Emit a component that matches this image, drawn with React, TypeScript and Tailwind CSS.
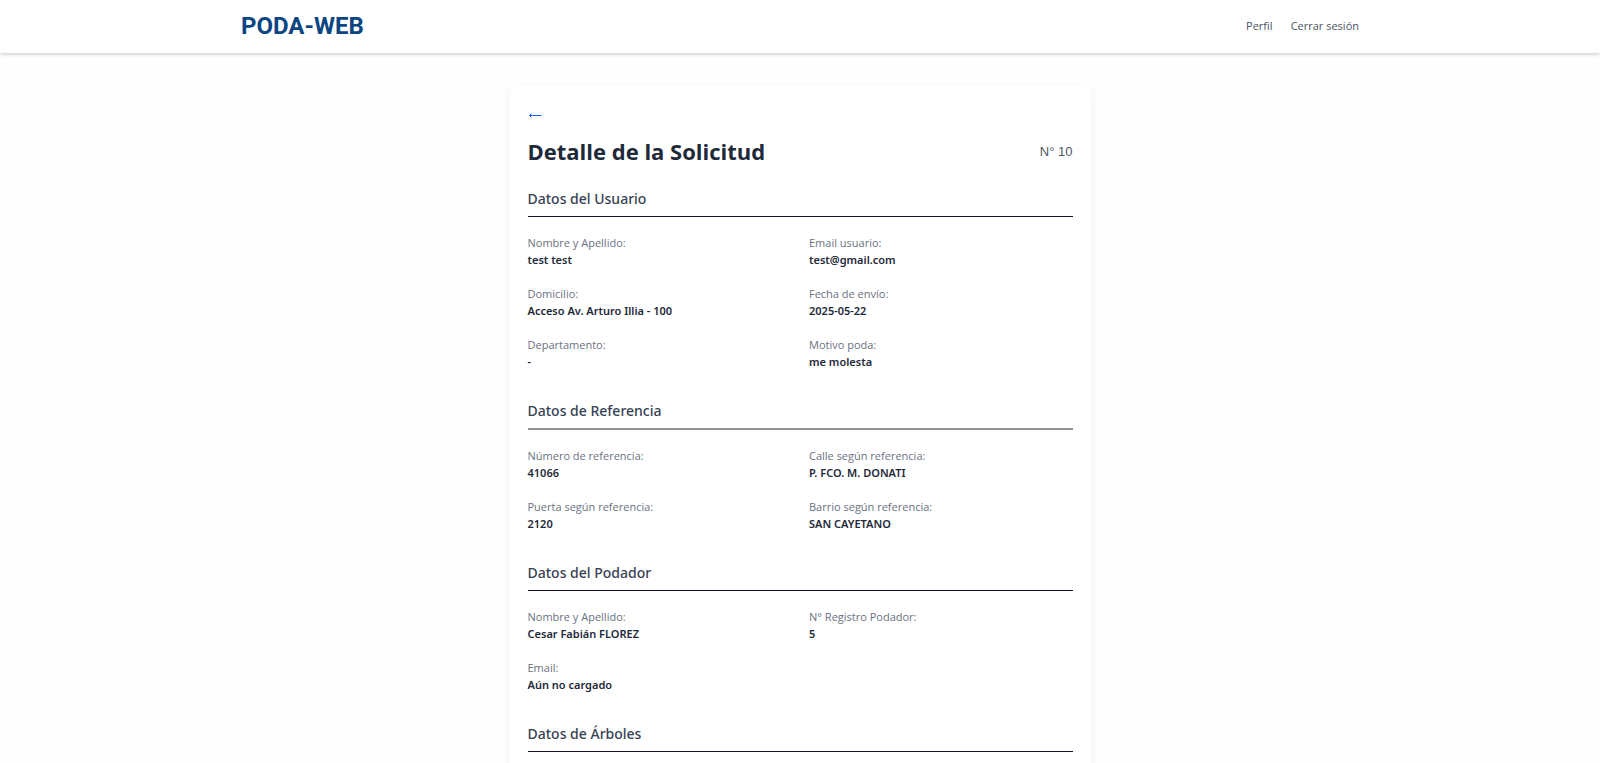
type Field = { label: string; value: string };
type Section = { title: string; rule: string; fields: Field[] };

const darkRule = "border-b border-gray-900";
const softRule = "border-b-2 border-[#929292]";

const sections: Section[] = [
  {
    title: "Datos del Usuario",
    rule: darkRule,
    fields: [
      { label: "Nombre y Apellido:", value: "test test" },
      { label: "Email usuario:", value: "test@gmail.com" },
      { label: "Domicilio:", value: "Acceso Av. Arturo Illia - 100" },
      { label: "Fecha de envío:", value: "2025-05-22" },
      { label: "Departamento:", value: "-" },
      { label: "Motivo poda:", value: "me molesta" },
    ],
  },
  {
    title: "Datos de Referencia",
    rule: softRule,
    fields: [
      { label: "Número de referencia:", value: "41066" },
      { label: "Calle según referencia:", value: "P. FCO. M. DONATI" },
      { label: "Puerta según referencia:", value: "2120" },
      { label: "Barrio según referencia:", value: "SAN CAYETANO" },
    ],
  },
  {
    title: "Datos del Podador",
    rule: darkRule,
    fields: [
      { label: "Nombre y Apellido:", value: "Cesar Fabián FLOREZ" },
      { label: "N° Registro Podador:", value: "5" },
      { label: "Email:", value: "Aún no cargado" },
    ],
  },
  { title: "Datos de Árboles", rule: darkRule, fields: [] },
];

function Header() {
  return (
    <header className="bg-white shadow-[0_1px_4px_rgba(0,0,0,0.22)]">
      <div className="mx-auto flex h-[53px] max-w-[1118px] items-center justify-between">
        <a href="#" className="pb-px font-[Roboto,sans-serif] text-2xl font-bold text-[#0b4582]">
          PODA-WEB
        </a>
        <nav className="flex gap-[18px] text-[11px] text-gray-600">
          <a href="#">Perfil</a>
          <a href="#">Cerrar sesión</a>
        </nav>
      </div>
    </header>
  );
}

function DetailSection({ title, rule, fields }: Section) {
  return (
    <section className="mb-7">
      <h2 className={`${rule} pb-1 font-['Noto_Sans',sans-serif] text-[14px] leading-[26px] font-medium text-gray-700`}>
        {title}
      </h2>
      <dl className="mt-[18px] grid grid-cols-2 gap-[18px]">
        {fields.map((f) => (
          <div key={f.label}>
            <dt className="text-[11px] leading-4 text-gray-500">{f.label}</dt>
            <dd className="font-['Noto_Sans',sans-serif] text-[11px] leading-[17px] font-semibold text-gray-800">
              {f.value}
            </dd>
          </div>
        ))}
      </dl>
    </section>
  );
}

export default function App() {
  return (
    <div className="h-screen overflow-hidden bg-[#fefefe] font-['Open_Sans','Noto_Sans',sans-serif]">
      <Header />
      <main className="mx-auto mt-8 max-w-[581px] rounded-md bg-white p-[18px] shadow-[0_4px_12px_rgba(0,0,0,0.06)]">
        <button type="button" aria-label="Volver" className="block h-6 text-blue-600">
          <svg viewBox="0 0 14 10" className="h-[10px] w-[14px]" fill="none" stroke="currentColor">
            <path d="M1 5.5H13.5M3.5 3.5L1.5 5.5L3.5 7.5" />
          </svg>
        </button>
        <div className="mt-2 mb-[18px] flex items-center justify-between">
          <h1 className="text-[22px] leading-[33px] font-bold text-gray-800">Detalle de la Solicitud</h1>
          <span className="font-['Liberation_Sans',sans-serif] text-[13px] text-gray-600">N° 10</span>
        </div>
        {sections.map((s) => (
          <DetailSection key={s.title} {...s} />
        ))}
      </main>
    </div>
  );
}
